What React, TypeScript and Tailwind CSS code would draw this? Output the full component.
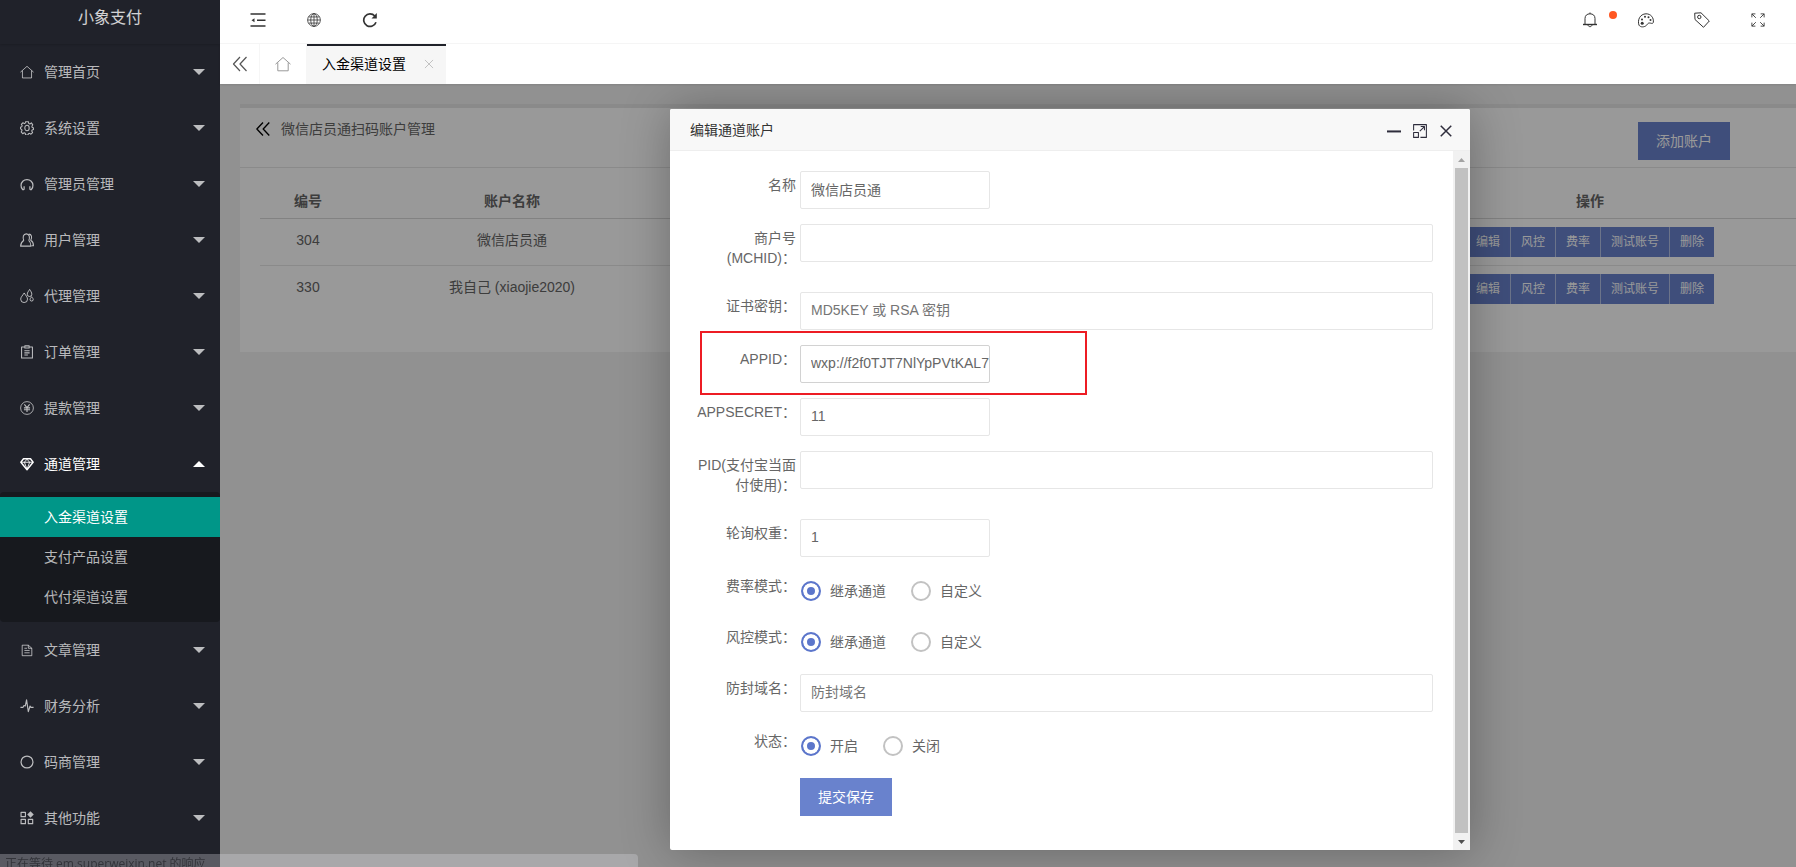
import { useState } from "react";
import type { ReactNode } from "react";
import clsx from "clsx";

interface IconProps {
    children: ReactNode;
    className?: string;
}

// all line icons share a 16x16 grid
const Icon = ({ children, className = "size-4" }: IconProps) => (
    <svg
        viewBox="0 0 16 16"
        className={clsx("shrink-0", className)}
        fill="none"
        stroke="currentColor"
        strokeLinejoin="round"
        aria-hidden="true"
    >
        {children}
    </svg>
);

const icons = {
    home: <path d="M.5 8.200 8 1.500l7.500 6.700M2.800 6.500v8.300h10.400V6.500" />,
    gear: (
        <>
            <path
                d="M6.400.8h3.200l.4 2 1.300.6L13 2.200l1.600 2.200-1 1.700.4 1.300 1.500.5v1.700l-1.600.6-.5 1.300 1 1.700-1.900 1.900-1.600-1-1.300.5-.4 1.300H6.400L6 14.100l-1.200-.6-1.700 1-1.800-2 1-1.700-.5-1.300L.5 9V7.200l1.400-.5.6-1.300-1-1.600 1.900-1.800 1.600 1 1-.6z"
                strokeWidth="1.200"
            />
            <ellipse cx="8" cy="8" rx="2.500" ry="3.200" strokeWidth="1.200" />
        </>
    ),
    headset: (
        <path
            d="M4.700 14.500v-4M4.500 14.300H3A6.500 6.500 0 0 1 1.200 9.500a6.800 6.500 0 0 1 13.600 0A6.500 6.500 0 0 1 13 14.300h-1.500M11.300 14.500v-4"
            strokeWidth="1.400"
        />
    ),
    users: (
        <>
            <path
                d="M4.300 8.500C2.900 5 3.500 1 7.200 1s4.300 4 2.900 7.500M4.500 8.300C2 10 .7 11.500.7 15h11.800c0-3.500-.5-5-2.600-6.600"
                strokeWidth="1.200"
            />
            <path d="M10 1.300c3.500 0 4 3.700 2.300 7 2 1.200 3.100 3.200 3.100 6.200h-2.200" strokeWidth="1.200" />
        </>
    ),
    drops: (
        <g strokeWidth="1.100">
            <path d="M4.800 4.500C3 7.500.8 9.300.8 11.600a3.900 3.900 0 0 0 7.800 0c0-2.300-2-4.100-3.800-7.100z" />
            <path d="M11 .5C9.800 2.500 8.300 4 8.300 6a2.600 2.600 0 0 0 5.200 0c0-2-1.300-3.500-2.500-5.500z" />
            <path d="M13.300 8.800c-.8 1.300-1.800 2-1.800 3.200a1.800 1.800 0 0 0 3.600 0c0-1.200-1-1.900-1.800-3.200z" />
        </g>
    ),
    clipboard: (
        <g strokeWidth="1.200">
            <path d="M5 2.200H1.800v12.600h12.400V2.200H11" />
            <path d="M5.500 1h5v2.500h-5zM5 6.500h6M5 9h6M5 11.500h4" />
        </g>
    ),
    yen: (
        <>
            <circle cx="8" cy="8" r="7.300" />
            <path d="M5 3.800 8 7.500l3-3.700M8 7.500v5M4.500 7.800h7M4.500 10h7" strokeWidth="1.300" />
        </>
    ),
    diamond: (
        <>
            <path d="M4 2h8l3 4-7 8.500L1 6z" strokeWidth="1.600" />
            <path d="M1 6h14M5 6l3 8M11 6l-3 8M5 6l3-3.500L11 6" />
        </>
    ),
    file: (
        <>
            <path d="M2.500 2.500h7L13.500 6v8.500h-11z" />
            <path d="M9.500 2.500V6h4M5 6h3M5 8.500h6M5 11.200h6" />
        </>
    ),
    pulse: <path d="M.5 9.500h3l1-2 1.500.5L7.500 1l2 13.500 2-6.500 1 1.500h3" strokeWidth="1.300" />,
    circle: <circle cx="8" cy="8" r="6.800" strokeWidth="1.400" />,
    blocks: (
        <>
            <path d="M1.200 1.500h5v5h-5zM1.200 9.500h5v5h-5zM9.500 9.500h5v5h-5z" strokeWidth="1.300" />
            <path d="m12 .3 3.700 3.700L12 7.700 8.300 4z" fill="currentColor" stroke="none" />
        </>
    ),
};

type IconName = keyof typeof icons;

interface MenuItem {
    label: string;
    icon: IconName;
    children?: string[];
}

const menu: MenuItem[] = [
    { label: "管理首页", icon: "home" },
    { label: "系统设置", icon: "gear" },
    { label: "管理员管理", icon: "headset" },
    { label: "用户管理", icon: "users" },
    { label: "代理管理", icon: "drops" },
    { label: "订单管理", icon: "clipboard" },
    { label: "提款管理", icon: "yen" },
    { label: "通道管理", icon: "diamond", children: ["入金渠道设置", "支付产品设置", "代付渠道设置"] },
    { label: "文章管理", icon: "file" },
    { label: "财务分析", icon: "pulse" },
    { label: "码商管理", icon: "circle" },
    { label: "其他功能", icon: "blocks" },
];

const accounts = [
    { id: 304, name: "微信店员通" },
    { id: 330, name: "我自己 (xiaojie2020)" },
];

const rowActions = ["编辑", "风控", "费率", "测试账号", "删除"];

function Sidebar() {
    return (
        <aside className="w-[220px] shrink-0 bg-[#20222a] text-sm text-white/70">
            <div className="flex h-11 justify-center pt-1 text-base leading-7 text-white/80 shadow-[0_1px_2px_rgba(0,0,0,0.15)]">
                小象支付
            </div>
            <nav>
                {menu.map((item) => (
                    <div key={item.label}>
                        <a
                            href="#"
                            className={clsx("flex h-14 items-center pr-[15px] pl-5", item.children && "text-white")}
                        >
                            <Icon className="size-3.5">{icons[item.icon]}</Icon>
                            <span className="ml-2.5 flex-1">{item.label}</span>
                            <svg viewBox="0 0 12 6" className="h-1.5 w-3" fill="currentColor" aria-hidden="true">
                                <path d={item.children ? "M0 6 6 0l6 6z" : "M0 0h12L6 6z"} />
                            </svg>
                        </a>
                        {item.children && (
                            <ul className="rounded-sm bg-[#17191e] py-[5px]">
                                {item.children.map((child, idx) => (
                                    <li key={child}>
                                        <a
                                            href="#"
                                            className={clsx(
                                                "flex h-10 items-center pl-11",
                                                idx === 0 && "bg-[#009688] text-white"
                                            )}
                                        >
                                            {child}
                                        </a>
                                    </li>
                                ))}
                            </ul>
                        )}
                    </div>
                ))}
            </nav>
        </aside>
    );
}

function HeaderButton({ label, children }: { label: string; children: ReactNode }) {
    return (
        <button type="button" aria-label={label} className="relative flex w-14 items-center justify-center">
            {children}
        </button>
    );
}

function TopBar() {
    return (
        <header className="flex h-11 justify-between border-b border-[#f6f6f6] bg-white px-2.5 pb-1 text-[#333]">
            <div className="flex">
                <HeaderButton label="侧边伸缩">
                    <Icon>
                        <path d="M.5 2h15M7 8.200h8.500M.5 14h15" strokeWidth="1.500" />
                        <path d="M1.500 8.200 4.500 6.200v4z" fill="currentColor" stroke="none" />
                    </Icon>
                </HeaderButton>
                <HeaderButton label="前台">
                    <Icon className="size-3.5">
                        <g strokeWidth=".9">
                            <circle cx="8" cy="8" r="7.300" />
                            <ellipse cx="8" cy="8" rx="3.700" ry="7.300" />
                            <path d="M8 .7v14.600M.7 8h14.600M1.800 4.500h12.400M1.800 11.500h12.400" />
                        </g>
                    </Icon>
                </HeaderButton>
                <HeaderButton label="刷新">
                    <Icon>
                        <path d="M14 10.200A6.300 6.300 0 1 1 12.800 4" strokeWidth="1.700" />
                        <path d="M14.800 1v5.500H9.500z" fill="currentColor" stroke="none" />
                    </Icon>
                </HeaderButton>
            </div>
            <div className="flex">
                <HeaderButton label="消息">
                    <Icon>
                        <path d="M3 12V6.500C3 3.500 5 1.800 8 1.800s5 1.700 5 4.700V12M6 13c.3 2.200 3.700 2.200 4 0M8 .5v1.300" />
                        <path d="M1 12.500h14" strokeWidth="1.400" />
                    </Icon>
                    <span className="absolute top-[11px] right-px size-2 rounded-full bg-[#ff5722]" />
                </HeaderButton>
                <HeaderButton label="主题">
                    <Icon>
                        <path d="M1 13.200C-.8 8 2 2 8 1.800c5 0 8 4 7.300 8.800-1 1.500-2.300.4-4 .4-1.500 0-1.800 1.300-2.800 2.300-2 2-6 2.200-7.500-.1z" />
                        <g fill="currentColor" stroke="none">
                            <circle cx="4.200" cy="11.300" r="1.500" />
                            <circle cx="4" cy="7.500" r="1" />
                            <circle cx="7" cy="4.700" r="1" />
                            <circle cx="10.500" cy="5.300" r="1" />
                            <circle cx="12.500" cy="8" r="1" />
                        </g>
                    </Icon>
                </HeaderButton>
                <HeaderButton label="便签">
                    <Icon>
                        <path d="M.7 1.200 7 .8 15.300 9 9.500 15.300 1 7.500z" />
                        <circle cx="5.300" cy="5" r="1.700" />
                    </Icon>
                </HeaderButton>
                <HeaderButton label="全屏">
                    <Icon className="size-3.5">
                        <path d="M1 5V1h4M1 1l4.500 4.500M11 1h4v4M15 1l-4.500 4.500M1 11v4h4M1 15l4.500-4.500M15 11v4h-4M15 15l-4.500-4.500" />
                    </Icon>
                </HeaderButton>
            </div>
        </header>
    );
}

function TabBar() {
    return (
        <div className="relative z-10 flex h-10 bg-white text-sm shadow-[0_1px_2px_rgba(0,0,0,0.1)]">
            <button
                type="button"
                aria-label="向左滚动"
                className="flex w-10 items-center justify-center border-r border-[#f6f6f6] text-[#555]"
            >
                <Icon>
                    <path d="M8 1 1.500 8 8 15M14.500 1 8 8l6.500 7" strokeWidth="1.200" />
                </Icon>
            </button>
            <button
                type="button"
                aria-label="主页"
                className="flex w-[47px] items-center justify-center border-r border-[#f6f6f6] text-[#999]"
            >
                <Icon>{icons.home}</Icon>
            </button>
            <div className="flex w-[139px] items-center justify-between border-t-2 border-[#20222a] bg-[#f6f6f6] pr-3 pb-0.5 pl-[15px] text-black">
                入金渠道设置
                <button type="button" aria-label="关闭标签" className="text-[#c2c2c2]">
                    <Icon className="size-2.5">
                        <path d="m1.500 1.500 13 13M14.500 1.500l-13 13" strokeWidth="1.600" />
                    </Icon>
                </button>
            </div>
        </div>
    );
}

function AccountList() {
    return (
        <section className="border-t-4 border-[#e6e6e6] bg-white pb-10 text-sm text-[#666]">
            <div className="flex h-[60px] justify-between border-b border-[#e6e6e6] pr-[66px] pl-4">
                <a href="#" className="flex h-[42px] items-center">
                    <Icon className="size-3.5 text-black">
                        <path d="M8 .5 1 8l7 7.500M15.200.5l-7 7.500 7 7.500" strokeWidth="1.500" />
                    </Icon>
                    <span className="ml-[11px]">微信店员通扫码账户管理</span>
                </a>
                <button type="button" className="mt-3.5 h-[38px] w-[92px] bg-[#6982cd] text-white">
                    添加账户
                </button>
            </div>
            <div className="pt-3 pl-5">
                <table className="w-full table-fixed text-center">
                    <colgroup>
                        <col className="w-24" />
                        <col className="w-[312px]" />
                        <col />
                        <col className="w-[412px]" />
                    </colgroup>
                    <thead>
                        <tr className="h-[38px] border-b border-[#d9d9d9]">
                            <th className="pt-1">编号</th>
                            <th className="pt-1">账户名称</th>
                            <th></th>
                            <th className="pt-1">操作</th>
                        </tr>
                    </thead>
                    <tbody>
                        {accounts.map((account) => (
                            <tr key={account.id} className="h-[47px] border-b border-[#e6e6e6] last:border-b-0">
                                <td className="pb-1">{account.id}</td>
                                <td className="pb-1">{account.name}</td>
                                <td></td>
                                <td>
                                    <div className="flex justify-center text-xs text-white">
                                        {rowActions.map((action) => (
                                            <button
                                                key={action}
                                                type="button"
                                                className="h-[30px] border-l border-white/50 bg-[#6982cd] px-2.5 first:border-l-0"
                                            >
                                                {action}
                                            </button>
                                        ))}
                                    </div>
                                </td>
                            </tr>
                        ))}
                    </tbody>
                </table>
            </div>
        </section>
    );
}

const labelClass = "w-[100px] shrink-0 pt-1 pb-[9px] text-right leading-5";

interface TextFieldProps {
    id: string;
    label: string;
    value?: string;
    placeholder?: string;
    wide?: boolean;
    active?: boolean;
}

function TextField({ id, label, value = "", placeholder, wide, active }: TextFieldProps) {
    const [text, setText] = useState(value);

    return (
        <div className="relative flex gap-1">
            <label htmlFor={id} className={labelClass}>
                {label}
            </label>
            <input
                id={id}
                type="text"
                value={text}
                placeholder={placeholder}
                onChange={(e) => setText(e.target.value)}
                className={clsx(
                    "h-[38px] rounded-xs border pb-0.5 pl-2.5 outline-none placeholder:text-[#757575]",
                    wide ? "min-w-0 flex-1" : "w-[190px]",
                    active ? "border-[#d2d2d2]" : "border-[#e6e6e6]"
                )}
            />
            {active && (
                <div className="pointer-events-none absolute -top-3.5 left-1 h-16 w-[387px] border-2 border-[#ed1c24]" />
            )}
        </div>
    );
}

function RadioField({ name, label, options }: { name: string; label: string; options: string[] }) {
    return (
        <div role="radiogroup" aria-label={label} className="flex h-9 gap-1">
            <span className={labelClass}>{label}</span>
            <div className="flex items-center gap-[25px] pt-0.5 pl-px">
                {options.map((option, idx) => (
                    <label key={option} className="flex items-center gap-[9px]">
                        <input
                            type="radio"
                            name={name}
                            defaultChecked={idx === 0}
                            className="size-5 appearance-none rounded-full border-2 border-[#c2c2c2] checked:border-[#5c76cb] checked:bg-[#5c76cb] checked:shadow-[inset_0_0_0_4px_white]"
                        />
                        {option}
                    </label>
                ))}
            </div>
        </div>
    );
}

function EditAccountDialog() {
    return (
        <div
            role="dialog"
            aria-label="编辑通道账户"
            className="flex w-[800px] flex-col rounded-xs bg-white text-sm text-[#666] shadow-[1px_1px_50px_rgba(0,0,0,0.3)]"
        >
            <div className="flex h-[42px] items-center justify-between rounded-t-xs border-b border-[#eee] bg-[#f8f8f8] pr-[11px] pl-5">
                <h2 className="text-[#333]">编辑通道账户</h2>
                <div className="flex pt-0.5 text-[#2e2d3c]">
                    <button type="button" aria-label="最小化" className="flex w-[26px] justify-center">
                        <Icon className="size-3.5">
                            <path d="M0 8.500h16" strokeWidth="2.300" />
                        </Icon>
                    </button>
                    <button type="button" aria-label="最大化" className="flex w-[26px] justify-center">
                        <Icon className="size-3.5">
                            <path
                                d="M.7 7.500V.7h14.600v14.600H8.500M.7 9.800h5.500v5.500H.7zM7.800 8.200l5-5M8.800 2.900h4.300v4.300"
                                strokeWidth="1.200"
                            />
                        </Icon>
                    </button>
                    <button type="button" aria-label="关闭" className="flex w-[26px] justify-center">
                        <Icon className="size-3.5">
                            <path d="m2 2 12 12M14 2 2 14" strokeWidth="1.700" />
                        </Icon>
                    </button>
                </div>
            </div>
            <div className="flex">
                <form className="flex min-w-0 flex-1 flex-col gap-[15px] px-5 pt-5 pb-[34px] pl-[26px]">
                    <TextField id="name" label="名称" value="微信店员通" />
                    <TextField id="mchid" label="商户号(MCHID)：" wide />
                    <TextField id="key" label="证书密钥：" placeholder="MD5KEY 或 RSA 密钥" wide />
                    <TextField id="appid" label="APPID：" value="wxp://f2f0TJT7NlYpPVtKAL7" active />
                    <TextField id="appsecret" label="APPSECRET：" value="11" />
                    <TextField id="pid" label="PID(支付宝当面付使用)：" wide />
                    <TextField id="weight" label="轮询权重：" value="1" />
                    <RadioField name="rate" label="费率模式：" options={["继承通道", "自定义"]} />
                    <RadioField name="risk" label="风控模式：" options={["继承通道", "自定义"]} />
                    <TextField id="domain" label="防封域名：" placeholder="防封域名" wide />
                    <RadioField name="status" label="状态：" options={["开启", "关闭"]} />
                    <button type="button" className="ml-[104px] h-[38px] w-[92px] bg-[#6982cd] text-white">
                        提交保存
                    </button>
                </form>
                <div className="flex w-[17px] flex-col items-center bg-[#f1f1f1]" aria-hidden="true">
                    <svg viewBox="0 0 17 17" className="size-[17px]" fill="#a3a3a3">
                        <path d="M5 11h7L8.500 7z" />
                    </svg>
                    <div className="w-[13px] flex-1 bg-[#c1c1c1]" />
                    <svg viewBox="0 0 17 17" className="size-[17px]" fill="#505050">
                        <path d="M5 7h7l-3.500 4z" />
                    </svg>
                </div>
            </div>
        </div>
    );
}

export default function App() {
    return (
        <div className="flex min-h-screen overflow-hidden font-['Liberation_Sans','Noto_Sans_CJK_SC',sans-serif]">
            <Sidebar />
            <div className="flex min-w-0 flex-1 flex-col">
                <TopBar />
                <TabBar />
                <main className="relative flex-1 bg-[#f2f2f2] pt-5 pl-5">
                    <AccountList />
                    <div className="absolute inset-0 overflow-hidden bg-black/40 pt-[25px] pl-[450px]">
                        <EditAccountDialog />
                    </div>
                </main>
            </div>
            <div className="fixed bottom-0 left-0 h-[13px] w-[638px] overflow-hidden rounded-tr-sm bg-[#dedee5]/30 pl-[5px] font-['Open_Sans','Noto_Sans_CJK_SC',sans-serif] text-xs leading-5 text-[#33343a]">
                正在等待 em.superweixin.net 的响应
            </div>
        </div>
    );
}
